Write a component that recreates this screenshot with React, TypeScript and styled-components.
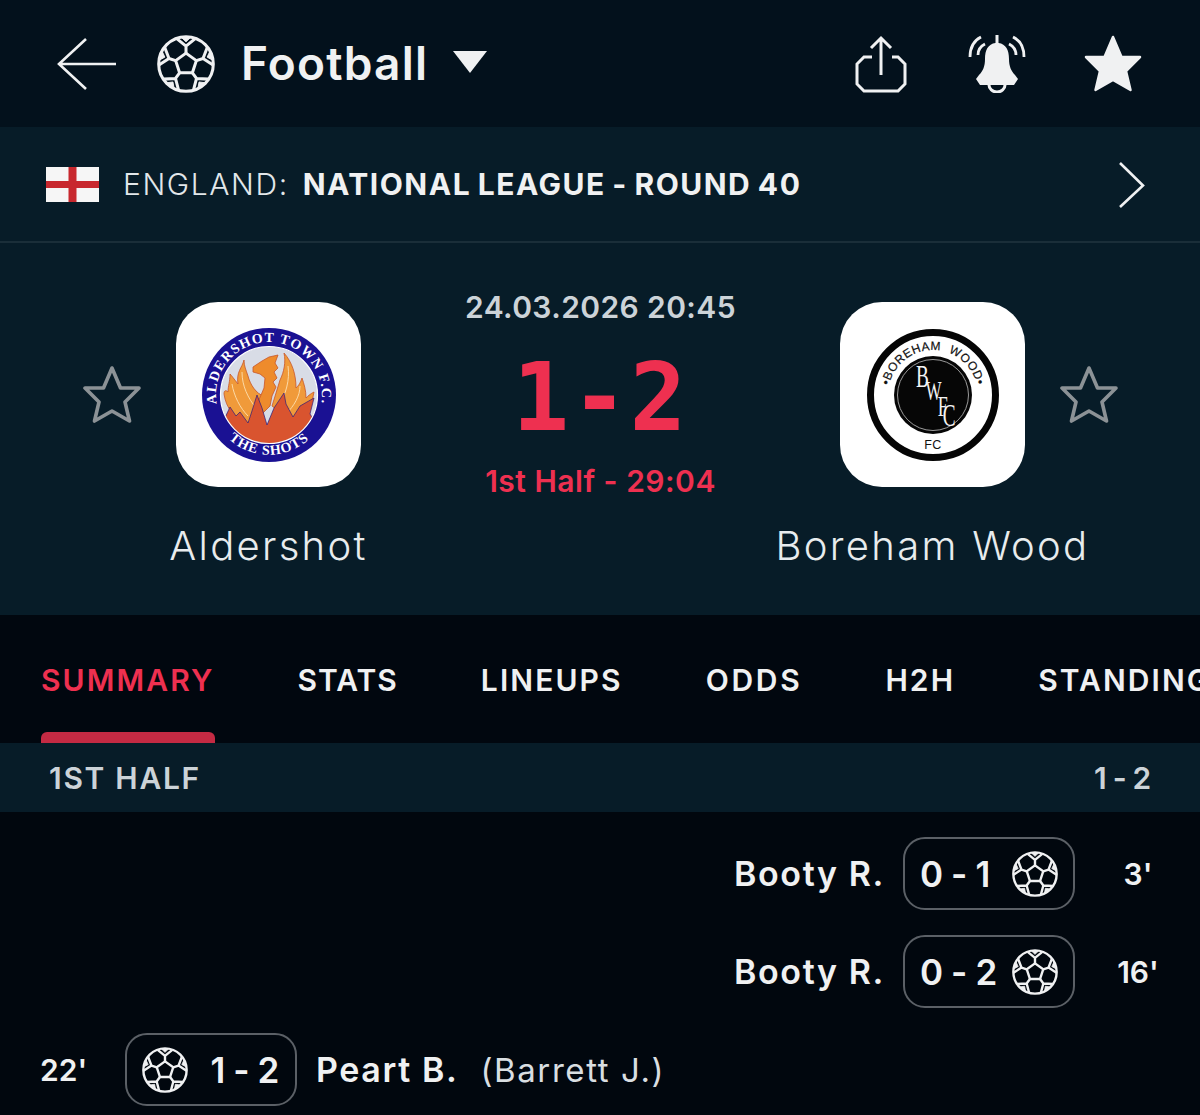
import React from "react";
import styled, { createGlobalStyle } from "styled-components";

const Global = createGlobalStyle`
  html, body { margin: 0; padding: 0; background: #01070e; }
  body { font-family: Inter, "Liberation Sans", sans-serif; color: #f0f1f2; }
`;

const Page = styled.div`
  width: 1200px;
  height: 1115px;
  overflow: hidden;
  background: #01070e;
`;

const Header = styled.header`
  height: 127px;
  background: #03111c;
  display: flex;
  align-items: center;
  padding: 0 58px 0 57px;
  box-sizing: border-box;
`;
const Back = styled.svg`
  width: 59px;
  height: 54px;
  margin-right: 41px;
`;
const SportTitle = styled.h1`
  margin: -1px 0 0 26px;
  font-size: 46px;
  font-weight: 600;
  letter-spacing: 1.2px;
  line-height: 56px;
  color: #f0f1f2;
`;
const Caret = styled.span`
  width: 0;
  height: 0;
  margin: -3px 0 0 25px;
  border-left: 17px solid transparent;
  border-right: 17px solid transparent;
  border-top: 22px solid #f0f1f2;
`;
const Actions = styled.div`
  margin-left: auto;
  display: flex;
  align-items: center;
`;
const ActionIcon = styled.svg<{ $gap: number }>`
  margin-left: ${(p) => p.$gap}px;
  display: block;
`;

const LeagueBar = styled.div`
  height: 116px;
  box-sizing: border-box;
  background: #071c28;
  border-bottom: 2px solid #1a2e39;
  display: flex;
  align-items: center;
  padding: 0 55px 0 46px;
`;
const Flag = styled.svg`
  width: 53px;
  height: 35px;
  margin-right: 24px;
`;
const Country = styled.span`
  font-size: 30px;
  font-weight: 300;
  letter-spacing: 1.6px;
  color: #e2e7ea;
  margin-right: 14px;
`;
const League = styled.span`
  font-size: 30px;
  font-weight: 700;
  letter-spacing: 1.5px;
  word-spacing: -2px;
  color: #f0f1f2;
`;
const Chevron = styled.svg`
  width: 27px;
  height: 47px;
  margin-left: auto;
`;

const Match = styled.section`
  height: 372px;
  box-sizing: border-box;
  background: #071c28;
  padding: 59px 82px 0 83px;
  display: grid;
  grid-template-columns: 58px 185px 1fr 185px 58px;
  grid-template-rows: 185px auto;
  align-content: start;
  column-gap: 35px;
  row-gap: 34px;
  align-items: center;
`;
const FavStar = styled.svg`
  width: 58px;
  height: 58px;
`;
const Crest = styled.div`
  width: 185px;
  height: 185px;
  border-radius: 42px;
  background: #fff;
  display: flex;
  align-items: center;
  justify-content: center;
`;
const TeamName = styled.div<{ $col: number }>`
  grid-column: ${(p) => p.$col};
  grid-row: 2;
  justify-self: center;
  width: max-content;
  font-size: 40px;
  font-weight: 300;
  letter-spacing: 2.3px;
  line-height: 50px;
  color: #e8ecee;
`;
const Centre = styled.div`
  grid-column: 3;
  grid-row: 1;
  align-self: start;
  margin-top: -13px;
  display: flex;
  flex-direction: column;
  align-items: center;
  white-space: nowrap;
`;
const KickOff = styled.div`
  font-size: 30px;
  font-weight: 600;
  letter-spacing: 0.4px;
  line-height: 36px;
  color: #ccd3d8;
`;
const Score = styled.div`
  font-family: "DejaVu Sans Mono", monospace;
  font-size: 94px;
  font-weight: 700;
  line-height: 110px;
  letter-spacing: 2px;
  margin-top: 18px;
  color: #ee3050;
`;
const Status = styled.div`
  font-size: 30px;
  font-weight: 600;
  letter-spacing: 0.5px;
  line-height: 36px;
  margin-top: 10px;
  color: #ee3050;
`;

const Tabs = styled.nav`
  height: 128px;
  background: #01070f;
  display: flex;
  gap: 83px;
  padding-left: 41px;
  overflow: hidden;
`;
const Tab = styled.div<{ $active?: boolean; $tracking?: number }>`
  position: relative;
  flex: none;
  padding-top: 47px;
  font-size: 30px;
  font-weight: 600;
  letter-spacing: ${(p) => p.$tracking ?? 2.1}px;
  line-height: 36px;
  color: ${(p) => (p.$active ? "#ee3050" : "#f0f1f2")};
  &::after {
    content: ${(p) => (p.$active ? '""' : "none")};
    position: absolute;
    left: 0;
    right: 0;
    bottom: 0;
    height: 11px;
    background: #c42a43;
    border-radius: 6px 6px 0 0;
  }
`;

const PeriodBar = styled.div`
  height: 69px;
  background: #071c28;
  display: flex;
  align-items: center;
  justify-content: space-between;
  padding: 0 47px 0 49px;
  font-size: 30px;
  font-weight: 600;
  letter-spacing: 1.7px;
  color: #ccd3d8;
`;
const PeriodScore = styled.span`
  word-spacing: -5px;
`;

const Events = styled.div`
  display: flex;
  flex-direction: column;
  gap: 25px;
  padding-top: 25px;
`;
const EventRow = styled.div<{ $side: "home" | "away" }>`
  height: 73px;
  display: flex;
  align-items: center;
  justify-content: ${(p) => (p.$side === "away" ? "flex-end" : "flex-start")};
  padding: ${(p) => (p.$side === "away" ? "0 20px 0 0" : "0 0 0 40px")};
`;
const Minute = styled.div<{ $side: "home" | "away" }>`
  font-size: 30px;
  font-weight: 600;
  color: #f0f1f2;
  ${(p) => (p.$side === "away" ? "width: 84px; margin-left: 21px; text-align: center;" : "width: 85px;")}
`;
const Pill = styled.div`
  width: 172px;
  height: 73px;
  box-sizing: border-box;
  flex: none;
  border: 2px solid #5b6066;
  border-radius: 22px;
  display: flex;
  align-items: center;
  justify-content: space-between;
  padding: 0 15px;
  font-size: 35px;
  font-weight: 600;
  letter-spacing: 0.6px;
  word-spacing: -2px;
  white-space: nowrap;
  color: #f0f1f2;
`;
const Player = styled.div<{ $side: "home" | "away" }>`
  font-size: 34px;
  font-weight: 600;
  letter-spacing: 1.6px;
  color: #f0f1f2;
  ${(p) => (p.$side === "away" ? "margin-right: 18px;" : "margin-left: 19px;")}
`;
const Assist = styled.div`
  margin-left: 22px;
  font-size: 33px;
  font-weight: 400;
  letter-spacing: 1.6px;
  color: #d9dee1;
`;

const polar = (r: number, deg: number) => {
  const a = (deg * Math.PI) / 180;
  return `${(12 + r * Math.cos(a)).toFixed(2)} ${(12 + r * Math.sin(a)).toFixed(2)}`;
};
const angles = [0, 1, 2, 3, 4].map((k) => -90 + 72 * k);
const seams = angles
  .map((a) => `M${polar(4.5, a)}L${polar(7.4, a)}M${polar(11.2, a - 20)}L${polar(7.4, a)}L${polar(11.2, a + 20)}`)
  .join("");
const pentagon = "M" + angles.map((a) => polar(4.5, a)).join("L") + "Z";
const patches = angles
  .map((a) => `M${polar(11.2, a - 10)}L${polar(9.2, a)}L${polar(11.2, a + 10)}Z`)
  .join("");

const Ball = ({ size }: { size: number }) => (
  <svg width={size} height={size} viewBox="0 0 24 24" fill="none" stroke="#f0f1f2" strokeWidth="1.25" strokeLinejoin="round" style={{ flex: "none" }}>
    <circle cx="12" cy="12" r="11.3" />
    <path d={pentagon} />
    <path d={seams} />
    <path d={patches} fill="#f0f1f2" strokeWidth="0.4" />
  </svg>
);

const starPts = "29,2 37.5,22 56,22 42,36 46.5,55 29,45 11.5,55 16,36 2,22 20.5,22";

const Aldershot = () => (
  <svg width="142" height="142" viewBox="0 0 142 142">
    <defs>
      <path id="ald-top" d="M25.1 97.5a53 53 0 1 1 91.8 0" />
      <path id="ald-bot" d="M19.4 100.8a59.5 59.5 0 0 0 103.2 0" />
      <clipPath id="ald-clip"><circle cx="71" cy="71" r="48" /></clipPath>
    </defs>
    <circle cx="71" cy="71" r="67" fill="#1a1193" />
    <circle cx="71" cy="71" r="48.5" fill="#d8dce6" stroke="#fff" strokeWidth="1.2" />
    <g clipPath="url(#ald-clip)">
      <path d="M46 36C44 44 38 48 40 60 36 55 34 52 32 50 32 58 30 62 30 68 28 66 26 66 26 70 28 84 36 94 50 100L62 95C60 85 62 78 66 72 58 70 52 60 50 52 48 46 46 42 46 36Z" fill="#f09a3a" stroke="#c8552a" strokeWidth="0.8" />
      <path d="M86 29C88 38 86 48 82 56L74 82 92 96C106 92 114 82 116 68 112 70 110 72 108 74 108 66 106 60 104 54 102 60 100 62 98 64 98 50 94 38 86 29Z" fill="#f09a3a" stroke="#c8552a" strokeWidth="0.8" />
      <path d="M44 48C44 62 50 74 58 84M34 60C36 72 42 84 50 92M90 42C92 56 88 70 80 84M102 62C102 72 96 82 88 90" fill="none" stroke="#fbd9a6" strokeWidth="1" />
      <path d="M55 43 64 37 71 33 80 31 77 39 80 44 76 48 79 54 75 58 78 63 74 72 72 82 62 92 60 78 66 64 67 54 62 50 55 48Z" fill="#ee8b2c" stroke="#c8552a" strokeWidth="0.8" />
      <path d="M24 100 32 83 38 92 42 88 50 99 53 90 59 71 64 84 69 101 76 84 86 69 88 80 95 93 102 82 116 74 112 90 125 110 71 130Z" fill="#d9542f" stroke="#2a1a7d" strokeWidth="0.7" />
    </g>
    <text fill="#fff" fontFamily="'Liberation Serif', serif" fontWeight="700" fontSize="14" letterSpacing="1.1">
      <textPath href="#ald-top" startOffset="50%" textAnchor="middle">ALDERSHOT TOWN F.C.</textPath>
    </text>
    <text fill="#fff" fontFamily="'Liberation Serif', serif" fontWeight="700" fontSize="14" letterSpacing="1">
      <textPath href="#ald-bot" startOffset="50%" textAnchor="middle">THE SHOTS</textPath>
    </text>
  </svg>
);

const Boreham = () => (
  <svg width="136" height="136" viewBox="0 0 136 136">
    <defs>
      <path id="bw-top" d="M23 68a45 45 0 0 1 90 0" />
    </defs>
    <circle cx="68" cy="68" r="62.5" fill="none" stroke="#050505" strokeWidth="7" />
    <circle cx="68" cy="68" r="39" fill="#060606" />
    <circle cx="68" cy="68" r="35.5" fill="none" stroke="#9a9a9a" strokeWidth="1" />
    <text fill="#111" fontFamily="'Liberation Sans', sans-serif" fontSize="12" letterSpacing="0.5" stroke="#111" strokeWidth="0.2">
      <textPath href="#bw-top" startOffset="50%" textAnchor="middle" xmlSpace="preserve">•BOREHAM  WOOD•</textPath>
    </text>
    <text transform="translate(51 60) scale(0.62 1)" fill="#f4f4f4" fontFamily="'Liberation Serif', serif" fontSize="31">
      B
      <tspan dx="-5" dy="13" fontSize="27">W</tspan>
      <tspan dx="-6" dy="16" fontSize="29">F</tspan>
      <tspan dx="-8" dy="10" fontSize="31">C</tspan>
    </text>
    <text x="68" y="122" textAnchor="middle" fill="#111" fontFamily="'Liberation Sans', sans-serif" fontSize="12.5" letterSpacing="0.5">FC</text>
  </svg>
);

type Ev = { side: "home" | "away"; minute: string; score: string; player: string; assist?: string };
const events: Ev[] = [
  { side: "away", minute: "3'", score: "0 - 1", player: "Booty R." },
  { side: "away", minute: "16'", score: "0 - 2", player: "Booty R." },
  { side: "home", minute: "22'", score: "1 - 2", player: "Peart B.", assist: "(Barrett J.)" },
];

export default function App() {
  return (
    <Page>
      <Global />
      <Header>
        <Back viewBox="0 0 59 54" fill="none" stroke="#f0f1f2" strokeWidth="2.6">
          <path d="M29 2 2 27l27 25M2 27h57" />
        </Back>
        <Ball size={58} />
        <SportTitle>Football</SportTitle>
        <Caret />
        <Actions>
          <ActionIcon $gap={0} width="52" height="58" viewBox="0 0 52 58" fill="none" stroke="#f0f1f2" strokeWidth="3">
            <path d="M26 40V3M16 13 26 3l10 10" />
            <path d="M17 22H9l-7 7v20l7 7h34l7-7V29l-7-7h-6" />
          </ActionIcon>
          <ActionIcon $gap={60} width="60" height="58" viewBox="0 0 60 58" fill="#f0f1f2" stroke="none">
            <path d="M28.5 0h3v8C39 9 42 15 42 24 42 31 44 36 48 40L51 44 47 50H13L9 44 12 40C16 36 18 31 18 24 18 15 21 9 28.5 8Z" />
            <path d="M22 50a8 7 0 0 0 16 0" fill="none" stroke="#f0f1f2" strokeWidth="3" />
            <path d="M14 2C6 6 3 13 3 22M18 9C14 11 11 15 11 20M46 2C54 6 57 13 57 22M42 9C46 11 49 15 49 20" fill="none" stroke="#f0f1f2" strokeWidth="2.8" />
          </ActionIcon>
          <ActionIcon $gap={57} width="58" height="58" viewBox="0 0 58 58" fill="#f0f1f2" stroke="#f0f1f2" strokeWidth="2.5" strokeLinejoin="round">
            <polygon points={starPts} />
          </ActionIcon>
        </Actions>
      </Header>

      <LeagueBar>
        <Flag viewBox="0 0 53 35">
          <rect width="53" height="35" fill="#f6f6f6" />
          <rect x="22.5" width="8" height="35" fill="#c8282e" />
          <rect y="14" width="53" height="7" fill="#c8282e" />
        </Flag>
        <Country>ENGLAND:</Country>
        <League>NATIONAL LEAGUE - ROUND 40</League>
        <Chevron viewBox="0 0 27 47" fill="none" stroke="#f0f1f2" strokeWidth="2.6">
          <path d="M2 2l23 22.5L2 46" />
        </Chevron>
      </LeagueBar>

      <Match>
        <FavStar viewBox="0 0 58 58" fill="none" stroke="#8c9296" strokeWidth="3.6" strokeLinejoin="round">
          <polygon points={starPts} />
        </FavStar>
        <Crest><Aldershot /></Crest>
        <Centre>
          <KickOff>24.03.2026 20:45</KickOff>
          <Score>1-2</Score>
          <Status>1st Half - 29:04</Status>
        </Centre>
        <Crest><Boreham /></Crest>
        <FavStar viewBox="0 0 58 58" fill="none" stroke="#8c9296" strokeWidth="3.6" strokeLinejoin="round">
          <polygon points={starPts} />
        </FavStar>
        <TeamName $col={2}>Aldershot</TeamName>
        <TeamName $col={4}>Boreham Wood</TeamName>
      </Match>

      <Tabs>
        <Tab $active>SUMMARY</Tab>
        <Tab $tracking={1}>STATS</Tab>
        <Tab>LINEUPS</Tab>
        <Tab $tracking={2.7}>ODDS</Tab>
        <Tab>H2H</Tab>
        <Tab>STANDINGS</Tab>
      </Tabs>

      <PeriodBar>
        <span>1ST HALF</span>
        <PeriodScore>1 - 2</PeriodScore>
      </PeriodBar>

      <Events>
        {events.map((e) =>
          e.side === "away" ? (
            <EventRow key={e.minute} $side="away">
              <Player $side="away">{e.player}</Player>
              <Pill>
                <span>{e.score}</span>
                <Ball size={46} />
              </Pill>
              <Minute $side="away">{e.minute}</Minute>
            </EventRow>
          ) : (
            <EventRow key={e.minute} $side="home">
              <Minute $side="home">{e.minute}</Minute>
              <Pill>
                <Ball size={46} />
                <span>{e.score}</span>
              </Pill>
              <Player $side="home">{e.player}</Player>
              <Assist>{e.assist}</Assist>
            </EventRow>
          )
        )}
      </Events>
    </Page>
  );
}
